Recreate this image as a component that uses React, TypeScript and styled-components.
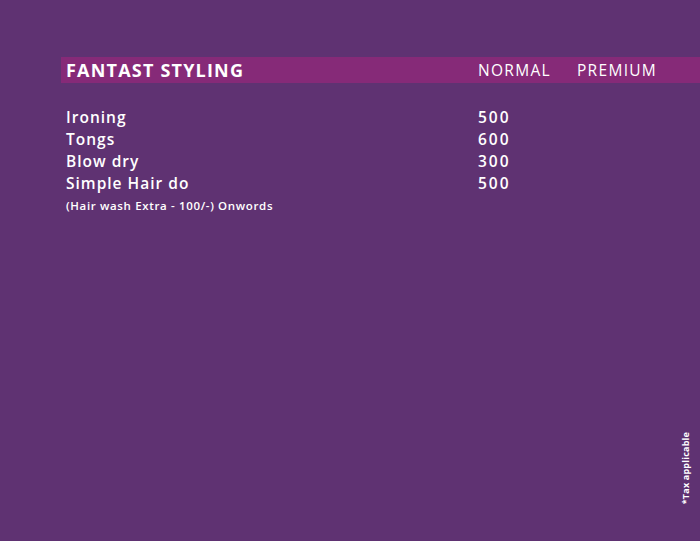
import styled, { createGlobalStyle } from "styled-components";

const GlobalStyle = createGlobalStyle`
  html, body {
    margin: 0;
    padding: 0;
    background: #5f3272;
  }
  body {
    font-family: "Open Sans", "Noto Sans", sans-serif;
    color: #ffffff;
  }
`;

const Page = styled.div`
  position: relative;
  width: 700px;
  height: 541px;
  background: #5f3272;
  padding: 57px 0 0 61px;
  box-sizing: border-box;
  overflow: hidden;
`;

const HeaderBar = styled.div`
  display: grid;
  grid-template-columns: 412px 99px 1fr;
  align-items: center;
  height: 26px;
  padding-left: 5px;
  background: #862a78;
`;

const Title = styled.div`
  font-size: 18px;
  font-weight: 700;
  letter-spacing: 1.2px;
`;

const ColHead = styled.div`
  font-size: 15.5px;
  font-weight: 400;
  letter-spacing: 1.3px;
`;

const List = styled.div`
  display: flex;
  flex-direction: column;
  padding: 23px 0 0 5px;
`;

const Row = styled.div`
  display: grid;
  grid-template-columns: 412px 99px 1fr;
  height: 22px;
  align-items: center;
  font-size: 15.5px;
  font-weight: 600;
`;

const Name = styled.span`
  letter-spacing: 1px;
`;

const Price = styled.span`
  letter-spacing: 2px;
`;

const Note = styled.div`
  margin-top: 4px;
  font-size: 11.5px;
  font-weight: 600;
  letter-spacing: 0.65px;
`;

const TaxNote = styled.div`
  position: absolute;
  right: 8px;
  top: 432px;
  writing-mode: vertical-rl;
  transform: rotate(180deg);
  font-size: 9px;
  font-weight: 700;
  letter-spacing: 0.2px;
  white-space: nowrap;
`;

const items = [
  { name: "Ironing", normal: "500", premium: "" },
  { name: "Tongs", normal: "600", premium: "" },
  { name: "Blow dry", normal: "300", premium: "" },
  { name: "Simple Hair do", normal: "500", premium: "" },
];

export default function App() {
  return (
    <>
      <GlobalStyle />
      <Page>
        <HeaderBar>
          <Title>FANTAST STYLING</Title>
          <ColHead>NORMAL</ColHead>
          <ColHead>PREMIUM</ColHead>
        </HeaderBar>
        <List>
          {items.map((item) => (
            <Row key={item.name}>
              <Name>{item.name}</Name>
              <Price>{item.normal}</Price>
              <Price>{item.premium}</Price>
            </Row>
          ))}
          <Note>(Hair wash Extra - 100/-) Onwords</Note>
        </List>
        <TaxNote>*Tax applicable</TaxNote>
      </Page>
    </>
  );
}
